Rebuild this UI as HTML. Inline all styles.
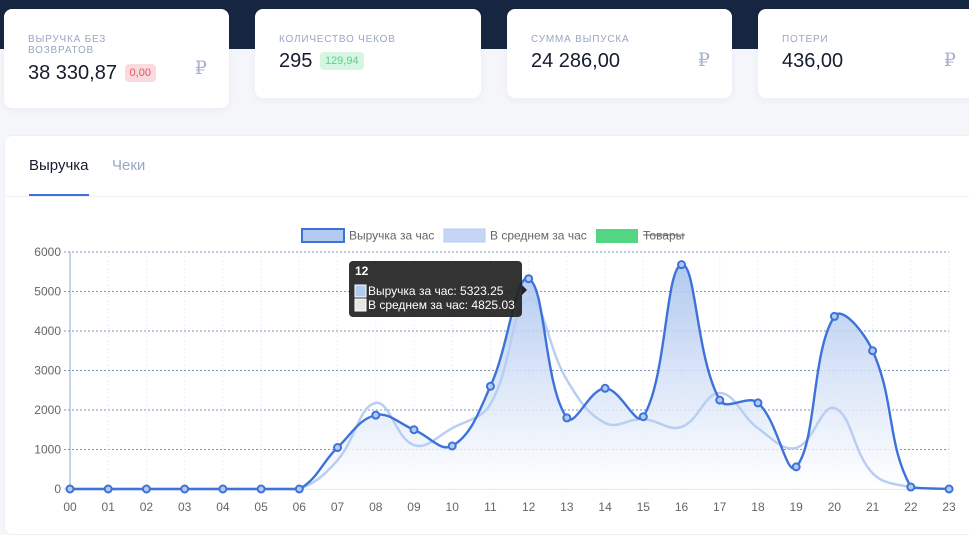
<!DOCTYPE html>
<html><head><meta charset="utf-8">
<style>
*{box-sizing:border-box;margin:0;padding:0}
body{width:969px;height:522px;overflow:hidden;background:#f5f6fa;font-family:"Liberation Sans",sans-serif;position:relative}
.top{position:absolute;left:0;top:0;width:969px;height:49px;background:#172640}
.card{position:absolute;top:9px;height:89px;background:#fff;border-radius:8px;box-shadow:0 2px 8px rgba(30,40,80,.05)}
.lbl{position:absolute;left:24px;top:35px;font-size:10px;letter-spacing:.8px;color:#9aa6c4;line-height:11px;text-transform:uppercase}
.val{position:absolute;left:24px;font-size:20px;color:#151c2e}
.badge{display:inline-block;font-size:11px;padding:3px 5px;border-radius:4px;vertical-align:3px;margin-left:2px}
.rub{position:absolute;right:22px;top:40px;font-size:19px;color:#a7b1cd;font-family:"Liberation Serif","DejaVu Serif",serif}
.panel{position:absolute;left:4px;top:135px;width:980px;height:400px;background:#fff;border-radius:8px;border:1px solid #edf0f6}
</style></head><body>
<div class="top"></div>
<div class="card" style="left:4px;width:225px;height:99px"><div class="lbl" style="top:25px">Выручка без<br>возвратов</div><div class="val" style="top:53px">38 330,87 <span class="badge" style="background:#fadadd;color:#e25563">0,00</span></div><div class="rub" style="top:48px">₽</div></div>
<div class="card" style="left:255px;width:226px"><div class="lbl" style="top:25px">Количество чеков</div><div class="val" style="top:41px">295 <span class="badge" style="background:#d6f5e3;color:#5fcf8c">129,94</span></div></div>
<div class="card" style="left:507px;width:225px"><div class="lbl" style="top:25px">Сумма выпуска</div><div class="val" style="top:41px">24 286,00</div><div class="rub">₽</div></div>
<div class="card" style="left:758px;width:230px"><div class="lbl" style="top:25px">Потери</div><div class="val" style="top:41px">436,00</div><div class="rub" style="right:32px">₽</div></div>
<div class="panel">
<div style="position:absolute;left:24px;top:21px;font-size:15px;color:#151c2e">Выручка</div>
<div style="position:absolute;left:107px;top:21px;font-size:15px;color:#9aa6c4">Чеки</div>
<div style="position:absolute;left:24px;top:58px;width:60px;height:2px;background:#3d72d8"></div>
<div style="position:absolute;left:0;top:60px;width:100%;height:1px;background:#eef0f5"></div>
</div>
<svg id="c" width="969" height="522" style="position:absolute;left:0;top:0" font-family="Liberation Sans, sans-serif">
<defs><linearGradient id="g" x1="0" y1="0" x2="0" y2="1"><stop offset="0" stop-color="#a9c3ee" stop-opacity=".9"/><stop offset="1" stop-color="#ffffff" stop-opacity=".8"/></linearGradient></defs>
<rect x="302" y="229" width="42" height="13" fill="#b3cbf0" stroke="#3d72d8" stroke-width="2"/>
<text x="349" y="239.5" font-size="12" fill="#666">Выручка за час</text>
<rect x="444" y="229" width="41" height="13" fill="#c4d6f4" stroke="#b3cbf0" stroke-width="1"/>
<text x="490" y="239.5" font-size="12" fill="#666">В среднем за час</text>
<rect x="596" y="229" width="42" height="14" fill="#52d681"/>
<text x="643" y="239.5" font-size="12" fill="#666">Товары</text>
<line x1="643" y1="235" x2="685" y2="235" stroke="#666"/>
<g id="grid"></g>
<path id="fill" fill="url(#g)"/>
<path id="avg" fill="none" stroke="#b8cef3" stroke-width="2.5"/>
<path id="rev" fill="none" stroke="#3d72d8" stroke-width="2.4"/>
<g id="pts"></g>
<g transform="translate(349,261)">
<rect width="173" height="56" rx="4" fill="#222" fill-opacity=".92"/>
<path d="M173 24 l5 5 l-5 5z" fill="#222"/>
<text x="6" y="14" font-size="12" font-weight="bold" fill="#fff">12</text>
<rect x="6" y="24" width="11" height="12" fill="#b3cbf0" stroke="#fff" stroke-width="1"/>
<text x="19" y="34" font-size="12" fill="#fff">Выручка за час: 5323.25</text>
<rect x="6" y="38" width="11" height="12" fill="#e6e6e6" stroke="#fff" stroke-width="1"/>
<text x="19" y="48" font-size="12" fill="#fff">В среднем за час: 4825.03</text>
</g>
</svg>
<script>
var X=i=>70+i*38.22,Y=v=>489-v*0.0395;
var rev=[0,0,0,0,0,0,0,1050,1870,1500,1090,2600,5323,1800,2550,1830,5680,2250,2180,560,4370,3500,50,0];
var avg=[0,0,0,0,0,0,0,730,2180,1110,1540,2150,4825,2760,1670,1770,1570,2430,1540,1040,2050,400,50,0];
function sp(d){var p=d.map((v,i)=>[X(i),Y(v)]),t=0.4,cp=[];
for(var i=0;i<p.length;i++){var a=p[i-1]||p[i],b=p[i],c=p[i+1]||p[i];
var d01=Math.hypot(b[0]-a[0],b[1]-a[1]),d12=Math.hypot(c[0]-b[0],c[1]-b[1]),s=d01+d12||1;
var fa=t*d01/s,fb=t*d12/s;
cp.push({p:[b[0]-fa*(c[0]-a[0]),Math.min(489,b[1]-fa*(c[1]-a[1]))],n:[b[0]+fb*(c[0]-a[0]),Math.min(489,b[1]+fb*(c[1]-a[1]))]});}
var s="M"+p[0].join(" ");
for(var i=0;i<p.length-1;i++)s+=" C"+cp[i].n.join(" ")+" "+cp[i+1].p.join(" ")+" "+p[i+1].join(" ");
return s;}
var r=sp(rev);
document.getElementById("rev").setAttribute("d",r);
document.getElementById("avg").setAttribute("d",sp(avg));
document.getElementById("fill").setAttribute("d",r+" L"+X(23)+" 489 L70 489Z");
var g="";
for(var k=0;k<=6;k++){var y=Y(k*1000);g+='<line x1="64" x2="949" y1="'+y+'" y2="'+y+'" stroke="#7f93b8" stroke-dasharray="2 2" stroke-width="1"/><text x="61" y="'+(y+4)+'" font-size="12" fill="#666" text-anchor="end">'+(k*1000)+'</text>';}
for(var i=0;i<24;i++){var x=X(i);if(i>0)g+='<line x1="'+x+'" x2="'+x+'" y1="252" y2="489" stroke="#eef0f5" stroke-dasharray="2 2"/>';g+='<text x="'+x+'" y="511" font-size="12" fill="#666" text-anchor="middle">'+(i<10?"0"+i:i)+'</text>';}
g+='<line x1="70" x2="70" y1="252" y2="489" stroke="#8fa6d6"/><line x1="64" x2="949" y1="489" y2="489" stroke="#cfd6e4"/>';
document.getElementById("grid").innerHTML=g;
var p="";rev.forEach((v,i)=>{p+='<circle cx="'+X(i)+'" cy="'+Y(v)+'" r="3.5" fill="#b3cbf0" stroke="#3d72d8" stroke-width="2"/>';});
document.getElementById("pts").innerHTML=p;
</script>
</body></html>
